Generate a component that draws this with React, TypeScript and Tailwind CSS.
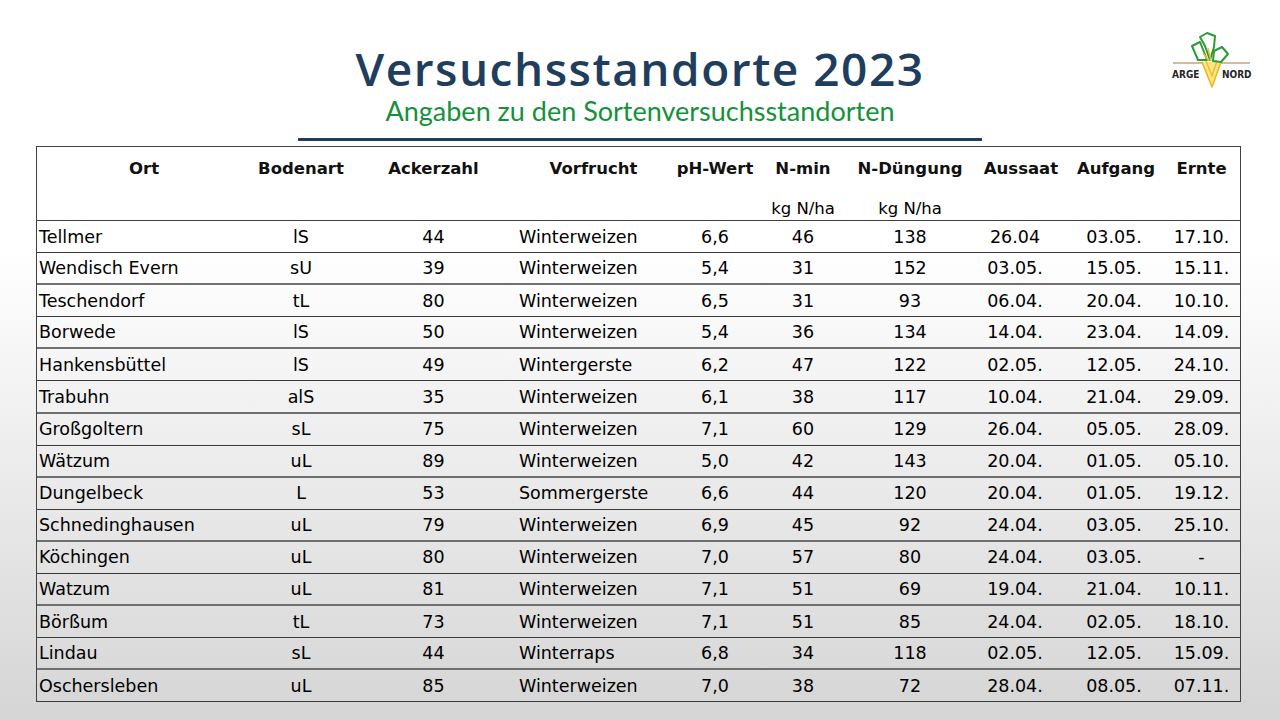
import React from "react";

type Row = [string, string, string, string, string, string, string, string, string, string];

const ROWS: Row[] = [
  ["Tellmer", "lS", "44", "Winterweizen", "6,6", "46", "138", "26.04", "03.05.", "17.10."],
  ["Wendisch Evern", "sU", "39", "Winterweizen", "5,4", "31", "152", "03.05.", "15.05.", "15.11."],
  ["Teschendorf", "tL", "80", "Winterweizen", "6,5", "31", "93", "06.04.", "20.04.", "10.10."],
  ["Borwede", "lS", "50", "Winterweizen", "5,4", "36", "134", "14.04.", "23.04.", "14.09."],
  ["Hankensbüttel", "lS", "49", "Wintergerste", "6,2", "47", "122", "02.05.", "12.05.", "24.10."],
  ["Trabuhn", "alS", "35", "Winterweizen", "6,1", "38", "117", "10.04.", "21.04.", "29.09."],
  ["Großgoltern", "sL", "75", "Winterweizen", "7,1", "60", "129", "26.04.", "05.05.", "28.09."],
  ["Wätzum", "uL", "89", "Winterweizen", "5,0", "42", "143", "20.04.", "01.05.", "05.10."],
  ["Dungelbeck", "L", "53", "Sommergerste", "6,6", "44", "120", "20.04.", "01.05.", "19.12."],
  ["Schnedinghausen", "uL", "79", "Winterweizen", "6,9", "45", "92", "24.04.", "03.05.", "25.10."],
  ["Köchingen", "uL", "80", "Winterweizen", "7,0", "57", "80", "24.04.", "03.05.", "-"],
  ["Watzum", "uL", "81", "Winterweizen", "7,1", "51", "69", "19.04.", "21.04.", "10.11."],
  ["Börßum", "tL", "73", "Winterweizen", "7,1", "51", "85", "24.04.", "02.05.", "18.10."],
  ["Lindau", "sL", "44", "Winterraps", "6,8", "34", "118", "02.05.", "12.05.", "15.09."],
  ["Oschersleben", "uL", "85", "Winterweizen", "7,0", "38", "72", "28.04.", "08.05.", "07.11."],
];

const HEAD = ["Ort", "Bodenart", "Ackerzahl", "Vorfrucht", "pH-Wert", "N-min", "N-Düngung", "Aussaat", "Aufgang", "Ernte"];
const UNITS = ["", "", "", "", "", "kg N/ha", "kg N/ha", "", "", ""];

const GRID = "grid grid-cols-[214px_100px_165px_155px_88px_88px_126px_96px_94px_1fr]";

// per-column alignment of the data cells
const CELL = [
  "pl-[2px]",
  "text-center",
  "text-center",
  "pl-[3px]",
  "text-center",
  "text-center",
  "text-center",
  "text-center pr-[12px]",
  "text-center pr-[4px]",
  "text-center",
];

function Logo() {
  return (
    <div className="relative w-[80px] h-[56px]">
      <svg width="80" height="56" viewBox="0 0 80 56" className="absolute inset-0">
        <line x1="3" y1="31" x2="80" y2="31" stroke="#c9a27a" strokeWidth="1.3" />
        <path d="M32 30 L42 55 L51 30 Z" fill="#fbe78a" />
        <path d="M32 30 L42 55 L51 30" fill="none" stroke="#f0b51e" strokeWidth="1.6" strokeLinejoin="round" />
        <path d="M36 29 L42 44 L47 29" fill="none" stroke="#e9c232" strokeWidth="1.6" />
        <path d="M22 14 L30 10 L34 20 L37 28 L28 28 Z" fill="none" stroke="#2e9a35" strokeWidth="2" strokeLinejoin="round" />
        <path d="M30 5 L37 1 L45 4 L44 15 L40 28 L35 14 Z" fill="none" stroke="#2e9a35" strokeWidth="2" strokeLinejoin="round" />
        <path d="M44 19 L52 15 L58 22 L51 30 L43 29 Z" fill="none" stroke="#2e9a35" strokeWidth="2" strokeLinejoin="round" />
        <path d="M38 16 L41 29 M33 21 L39 29" fill="none" stroke="#f0c020" strokeWidth="1.4" />
      </svg>
      <span className="absolute left-[2px] top-[38px] text-[10px] font-bold leading-none text-[#262626] [font-family:'DejaVu_Sans_Condensed',sans-serif]">
        ARGE
      </span>
      <span className="absolute left-[52px] top-[38px] text-[10px] font-bold leading-none text-[#262626] [font-family:'DejaVu_Sans_Condensed',sans-serif]">
        NORD
      </span>
    </div>
  );
}

export default function App() {
  return (
    <div className="w-[1280px] h-[720px] overflow-hidden bg-[linear-gradient(to_bottom,#ffffff_0%,#ffffff_35%,#d5d5d5_100%)] [font-family:'DejaVu_Sans',sans-serif] text-black">
      <div className="grid grid-cols-[1fr_auto_1fr] items-start pt-[32px]">
        <div />
        <div className="flex flex-col items-center pt-[9px]">
          <h1 className="text-[46px] leading-[54px] font-semibold tracking-[1.5px] text-[#1f3e5e] [font-family:'Open_Sans',sans-serif]">
            Versuchsstandorte 2023
          </h1>
          <div className="text-[27px] leading-[32px] text-[#14923a] [font-family:'Lato',sans-serif]">
            Angaben zu den Sortenversuchsstandorten
          </div>
          <div className="mt-[11px] w-[684px] h-[3px] bg-[#1f3e5e]" />
        </div>
        <div className="justify-self-end mr-[30px]">
          <Logo />
        </div>
      </div>

      <div className="mx-[36px] mt-[5px] border-t border-x border-[#404040] w-[1205px]">
        <div className={`${GRID} border-b border-[#404040] h-[74px]`}>
          {HEAD.map((h, i) => (
            <div key={h} className="flex flex-col items-center">
              <div className="text-[16.5px] font-bold leading-[20px] pt-[12px] text-[#111]">{h}</div>
              <div className="text-[16.5px] leading-[20px] mt-[20px]">{UNITS[i]}</div>
            </div>
          ))}
        </div>
        {ROWS.map((r, ri) => (
          <div
            key={r[0]}
            className={`${GRID} h-[32.1px] items-center text-[17.5px] ${ri % 2 === 0 ? "border-b border-[#3a3a3a]" : "border-b-2 border-[#6f6f6f]"}`}
          >
            {r.map((c, ci) => (
              <div key={ci} className={`${CELL[ci]} leading-[20px]`}>
                {c}
              </div>
            ))}
          </div>
        ))}
      </div>
    </div>
  );
}
